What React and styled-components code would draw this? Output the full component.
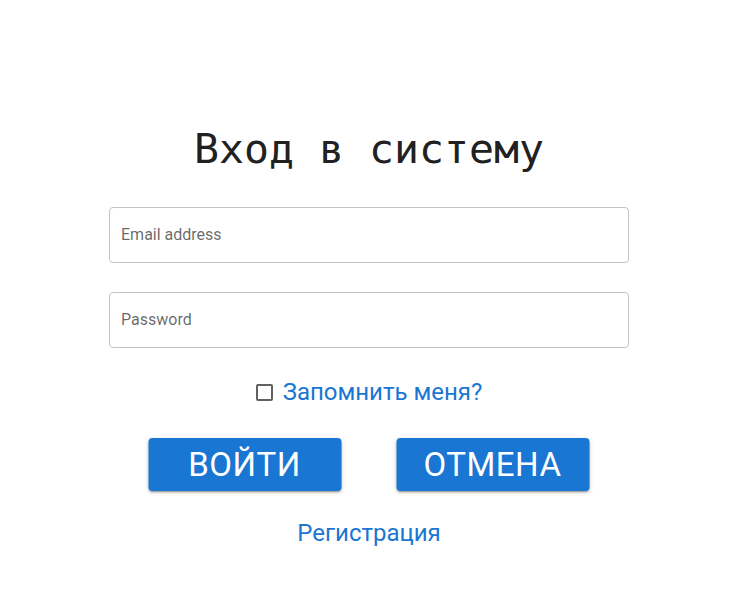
import React from "react";
import styled, { createGlobalStyle } from "styled-components";

const Global = createGlobalStyle`
  html, body { margin: 0; padding: 0; background: #fff; }
  body { font-family: Roboto, "Liberation Sans", Arial, sans-serif; }
  * { box-sizing: border-box; }
`;

const Page = styled.div`
  width: 738px;
  min-height: 614px;
  display: flex;
  flex-direction: column;
  align-items: center;
  padding-top: 122px;
`;

const Title = styled.h1`
  margin: 0;
  font-family: "DejaVu Sans Mono", "Liberation Mono", monospace;
  font-weight: 400;
  font-size: 41.5px;
  line-height: 54px;
  color: #212121;
  letter-spacing: 0;
`;

const Form = styled.form`
  margin-top: 31px;
  width: 520px;
  display: flex;
  flex-direction: column;
  align-items: center;
`;

const Field = styled.label`
  width: 100%;
  height: 56px;
  border: 1px solid #c4c4c4;
  border-radius: 4px;
  display: flex;
  align-items: center;
  padding: 0 11px 2px;
  margin-bottom: ${(p) => p.$mb || 0}px;
`;

const Input = styled.input`
  border: none;
  outline: none;
  width: 100%;
  font-family: Roboto, "Liberation Sans", sans-serif;
  font-size: 16px;
  color: rgba(0, 0, 0, 0.87);
  background: transparent;
  padding: 0;
  &::placeholder { color: rgba(0, 0, 0, 0.6); opacity: 1; }
`;

const RememberRow = styled.label`
  margin-top: 29px;
  display: flex;
  align-items: center;
  gap: 10px;
  cursor: pointer;
`;

const Box = styled.span`
  width: 17px;
  height: 17px;
  border: 2px solid #616161;
  border-radius: 2px;
  display: inline-block;
`;

const LinkText = styled.span`
  font-family: Roboto, "Liberation Sans", sans-serif;
  font-size: 24px;
  color: #1976d2;
  line-height: 30px;
`;

const Buttons = styled.div`
  margin-top: 31px;
  display: flex;
  gap: 55px;
  transform: translateX(-0.5px);
`;

const Button = styled.button`
  width: 193px;
  height: 53px;
  border: none;
  border-radius: 4px;
  background: #1976d2;
  color: #fff;
  font-family: Roboto, "Liberation Sans", sans-serif;
  font-size: 33px;
  font-weight: 400;
  letter-spacing: 0.5px;
  text-transform: uppercase;
  padding: 0;
  box-shadow: 0 3px 1px -2px rgba(0,0,0,0.2), 0 2px 2px 0 rgba(0,0,0,0.14), 0 1px 5px 0 rgba(0,0,0,0.12);
  cursor: pointer;
`;

const Register = styled.a`
  margin-top: 27px;
  font-family: Roboto, "Liberation Sans", sans-serif;
  font-size: 24px;
  line-height: 30px;
  color: #1976d2;
  text-decoration: none;
`;

export default function App() {
  return (
    <>
      <Global />
      <Page>
        <Title>Вход в систему</Title>
        <Form onSubmit={(e) => e.preventDefault()}>
          <Field $mb={29}>
            <Input placeholder="Email address" />
          </Field>
          <Field>
            <Input type="password" placeholder="Password" />
          </Field>
          <RememberRow>
            <Box />
            <LinkText>Запомнить меня?</LinkText>
          </RememberRow>
          <Buttons>
            <Button type="submit">Войти</Button>
            <Button type="button">Отмена</Button>
          </Buttons>
          <Register href="#">Регистрация</Register>
        </Form>
      </Page>
    </>
  );
}
